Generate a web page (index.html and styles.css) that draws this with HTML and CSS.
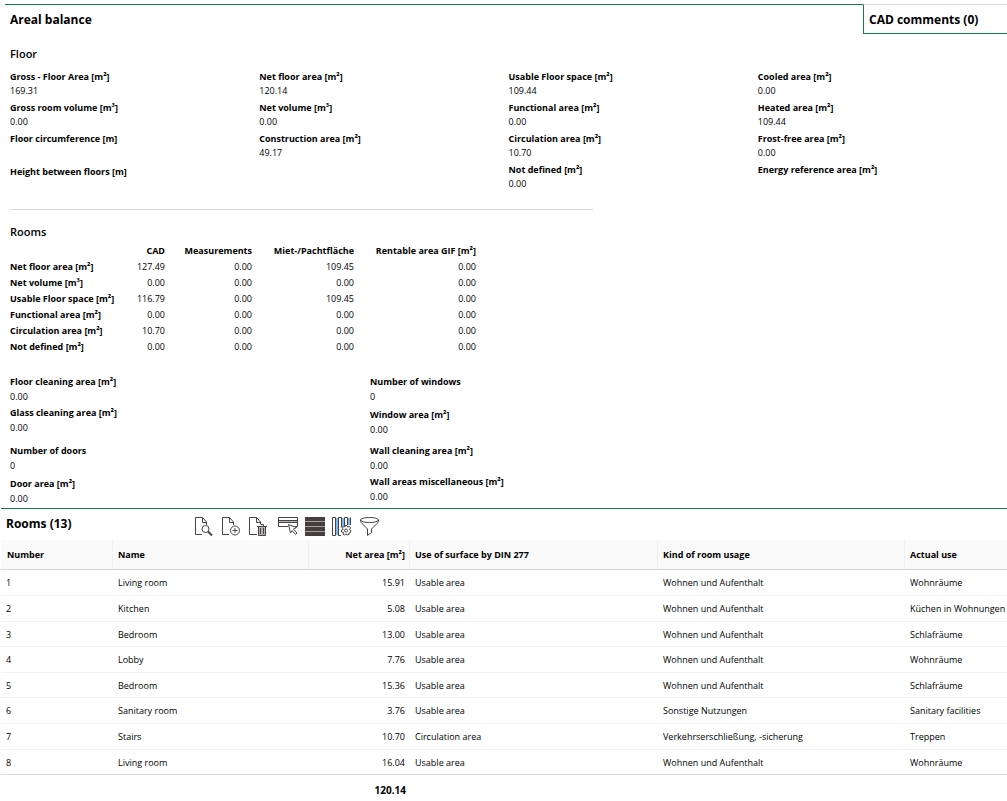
FILE: index.html
```html
<!DOCTYPE html>
<html lang="en">
<head>
<meta charset="utf-8">
<title>Areal balance</title>
<link rel="stylesheet" href="styles.css">
</head>
<body>
<header class="tabs">
  <h1 class="tab tab-active">Areal balance</h1>
  <button class="tab tab-other" type="button">CAD comments (0)</button>
</header>
<main>
  <section class="panel">
    <h2 class="section-title">Floor</h2>
    <div class="floor-grid">
      <dl class="fields">
        <dt>Gross - Floor Area [m²]</dt><dd>169.31</dd>
        <dt>Gross room volume [m³]</dt><dd>0.00</dd>
        <dt>Floor circumference [m]</dt><dd class="empty"></dd>
        <dt>Height between floors [m]</dt><dd></dd>
      </dl>
      <dl class="fields">
        <dt>Net floor area [m²]</dt><dd>120.14</dd>
        <dt>Net volume [m³]</dt><dd>0.00</dd>
        <dt>Construction area [m²]</dt><dd>49.17</dd>
      </dl>
      <dl class="fields">
        <dt>Usable Floor space [m²]</dt><dd>109.44</dd>
        <dt>Functional area [m²]</dt><dd>0.00</dd>
        <dt>Circulation area [m²]</dt><dd>10.70</dd>
        <dt>Not defined [m²]</dt><dd>0.00</dd>
      </dl>
      <dl class="fields">
        <dt>Cooled area [m²]</dt><dd>0.00</dd>
        <dt>Heated area [m²]</dt><dd>109.44</dd>
        <dt>Frost-free area [m²]</dt><dd>0.00</dd>
        <dt>Energy reference area [m²]</dt><dd></dd>
      </dl>
    </div>
    <hr class="divider">
    <h2 class="section-title">Rooms</h2>
    <table class="summary">
      <colgroup><col class="s-name"><col class="s-cad"><col class="s-meas"><col class="s-miet"><col class="s-gif"></colgroup>
      <thead>
        <tr><td></td><th scope="col">CAD</th><th scope="col">Measurements</th><th scope="col">Miet-/Pachtfläche</th><th scope="col">Rentable area GIF [m²]</th></tr>
      </thead>
      <tbody>
        <tr><th scope="row">Net floor area [m²]</th><td>127.49</td><td>0.00</td><td>109.45</td><td>0.00</td></tr>
        <tr><th scope="row">Net volume [m³]</th><td>0.00</td><td>0.00</td><td>0.00</td><td>0.00</td></tr>
        <tr><th scope="row">Usable Floor space [m²]</th><td>116.79</td><td>0.00</td><td>109.45</td><td>0.00</td></tr>
        <tr><th scope="row">Functional area [m²]</th><td>0.00</td><td>0.00</td><td>0.00</td><td>0.00</td></tr>
        <tr><th scope="row">Circulation area [m²]</th><td>10.70</td><td>0.00</td><td>0.00</td><td>0.00</td></tr>
        <tr><th scope="row">Not defined [m²]</th><td>0.00</td><td>0.00</td><td>0.00</td><td>0.00</td></tr>
      </tbody>
    </table>
    <div class="detail-grid">
      <dl class="fields">
        <dt>Floor cleaning area [m²]</dt><dd>0.00</dd>
        <dt>Glass cleaning area [m²]</dt><dd>0.00</dd>
      </dl>
      <dl class="fields loose">
        <dt>Number of windows</dt><dd>0</dd>
        <dt>Window area [m²]</dt><dd>0.00</dd>
      </dl>
      <dl class="fields loose">
        <dt>Number of doors</dt><dd>0</dd>
        <dt>Door area [m²]</dt><dd>0.00</dd>
      </dl>
      <dl class="fields">
        <dt>Wall cleaning area [m²]</dt><dd>0.00</dd>
        <dt>Wall areas miscellaneous [m²]</dt><dd>0.00</dd>
      </dl>
    </div>
  </section>
  <section class="rooms">
    <div class="rooms-bar">
      <h2 class="rooms-heading">Rooms (13)</h2>
      <div class="tools">
        <button type="button" aria-label="View room"><svg viewBox="0 0 20 20"><path d="M8 17.500H1.500V.5h7l4 4.500v3M8.500.5v5h4"/><circle cx="11.500" cy="12" r="3.500"/><path class="thick" d="M14 14.500l4 4"/></svg></button>
        <button type="button" aria-label="Add room"><svg viewBox="0 0 20 20"><path d="M8 17.500H1.500V.5h7l4 4.500v3M8.500.5v5h4"/><circle cx="14" cy="13.500" r="4.500"/><path d="M11.500 13.500h5M14 11v5"/></svg></button>
        <button type="button" aria-label="Delete room"><svg viewBox="0 0 20 20"><path d="M9 17.500H1.500V.5h7l4 4.500v2M8.500.5v5h4"/><path class="shade" d="M10.500 9.500h7v9h-7z"/><path d="M9 9.500h10M12.500 7.500h3v2M12.500 11v6M15.500 11v6"/></svg></button>
      </div>
      <div class="tools">
        <button type="button" aria-label="Select rows"><svg viewBox="0 0 20 20"><path class="shade" d="M.5 3.500h19v2H.5z"/><path d="M10 9.500H.5v-9h19v9H17M.5 3.500h19M.5 5.500h19"/><path class="cursor" d="M10.500 7.500l8 3-3 1.500 3.500 4-1.500 1.500-3.500-4-1.500 2.500z"/></svg></button>
        <button type="button" aria-label="Row density"><svg viewBox="0 0 20 20"><path class="band" d="M0 0h20v19H0z"/><path class="stripe" d="M0 4.500h20M0 9.500h20M0 14.500h20"/></svg></button>
        <button type="button" aria-label="Configure columns"><svg viewBox="0 0 20 20"><path class="blue" d="M5 1v17M11 1v9M17 1v7"/><path d="M.5.5h3v18h-3zM9 18.500H6.500V.5h3v10M12.500 9V.5h3V8M18.500 8V.5"/><path class="gear" d="M13 8.500h2l.5 1.500 2-.5 1 1.500-1 1.500 1.500 1-.5 2-1.500.5v1.500l-2 .5-1-1-1.500 1-1.500-1 .5-1.500-2-.5v-2l1.500-.5-.5-2 1.500-1 1 .5z"/><circle cx="14" cy="13.500" r="1.500"/></svg></button>
        <button type="button" aria-label="Filter"><svg viewBox="0 0 20 20"><ellipse cx="10.500" cy="3" rx="9" ry="2.500"/><path d="M1.500 3c0 2 1 3 2 4l5 5v6.500l4-3V12l5-5c1-1 2-2 2-4"/></svg></button>
      </div>
    </div>
    <table class="list">
      <colgroup><col class="c-number"><col class="c-name"><col class="c-area"><col class="c-din"><col class="c-kind"><col></colgroup>
      <thead>
        <tr><th scope="col">Number</th><th scope="col">Name</th><th scope="col" class="num">Net area [m²]</th><th scope="col">Use of surface by DIN 277</th><th scope="col">Kind of room usage</th><th scope="col">Actual use</th></tr>
      </thead>
      <tbody>
        <tr><td>1</td><td>Living room</td><td class="num">15.91</td><td>Usable area</td><td>Wohnen und Aufenthalt</td><td>Wohnräume</td></tr>
        <tr><td>2</td><td>Kitchen</td><td class="num">5.08</td><td>Usable area</td><td>Wohnen und Aufenthalt</td><td>Küchen in Wohnungen</td></tr>
        <tr><td>3</td><td>Bedroom</td><td class="num">13.00</td><td>Usable area</td><td>Wohnen und Aufenthalt</td><td>Schlafräume</td></tr>
        <tr><td>4</td><td>Lobby</td><td class="num">7.76</td><td>Usable area</td><td>Wohnen und Aufenthalt</td><td>Wohnräume</td></tr>
        <tr><td>5</td><td>Bedroom</td><td class="num">15.36</td><td>Usable area</td><td>Wohnen und Aufenthalt</td><td>Schlafräume</td></tr>
        <tr><td>6</td><td>Sanitary room</td><td class="num">3.76</td><td>Usable area</td><td>Sonstige Nutzungen</td><td>Sanitary facilities</td></tr>
        <tr><td>7</td><td>Stairs</td><td class="num">10.70</td><td>Circulation area</td><td>Verkehrserschließung, -sicherung</td><td>Treppen</td></tr>
        <tr><td>8</td><td>Living room</td><td class="num">16.04</td><td>Usable area</td><td>Wohnen und Aufenthalt</td><td>Wohnräume</td></tr>
      </tbody>
      <tfoot>
        <tr><td></td><td></td><td class="num">120.14</td><td></td><td></td><td></td></tr>
      </tfoot>
    </table>
  </section>
</main>
</body>
</html>
```
FILE: styles.css
```css
* { box-sizing: border-box; }
body {
  margin: 0;
  padding-top: 4px;
  background: #fff;
  color: #000;
  font: 9px/15px "Open Sans", "Noto Sans", sans-serif;
}
h1, h2, dl, dd { margin: 0; }

.tabs { display: flex; height: 30px; margin-left: 5px; }
.tab {
  font: 700 12px/28px "Open Sans", "Noto Sans", sans-serif;
  color: #000;
  text-align: left;
}
.tab-active { flex: 1; border-top: 1px solid #108043; padding: 1px 5px 0; }
.tab-other {
  width: 144px;
  padding: 1px 5px 0;
  background: #fff;
  border: solid #108043;
  border-width: 1px 0 1px 1px;
  border-top-color: #d9d9d9;
}

.panel { padding: 11px 0 2px 10px; }
.section-title { font-size: 11px; line-height: 18px; font-weight: 600; }
.floor-grid {
  display: grid;
  grid-template-columns: repeat(4, 1fr);
  margin-top: 6px;
}
.fields dt { line-height: 15px; font-weight: 700; }
.fields dd { line-height: 13px; min-height: 13px; margin-bottom: 3px; }
.fields dd.empty { margin-bottom: 5px; }
.divider {
  width: 59%;
  max-width: 583px;
  height: 1px;
  margin: 14px 0 13px;
  border: 0;
  background: #d9d9d9;
}

.summary { width: 466px; margin-top: 2px; border-collapse: collapse; table-layout: fixed; }
.summary th, .summary td { padding: 0; line-height: 16px; text-align: right; }
.summary th { font-weight: 700; white-space: nowrap; }
.summary tbody th { text-align: left; }
.s-name { width: 110px; }
.s-cad { width: 45px; }
.s-meas { width: 87px; }
.s-miet { width: 102px; }
.s-gif { width: 122px; }

.detail-grid {
  display: grid;
  grid-template-columns: 360px 1fr;
  row-gap: 6px;
  margin-top: 19px;
}
.detail-grid dd { padding-top: 1px; line-height: 14px; margin-bottom: 1px; }
.detail-grid .loose dd { margin-bottom: 3px; }
.detail-grid .fields dd:last-child { margin-bottom: 0; }

.rooms { border-top: 1px solid #108043; margin-left: 1px; }
.rooms-bar { display: flex; gap: 10px; height: 31px; padding-left: 5px; }
.rooms-heading { width: 178px; font-size: 12px; line-height: 29px; font-weight: 700; }
.tools { display: flex; gap: 7px; padding-top: 8px; }
.tools button { width: 20px; height: 20px; padding: 0; border: 0; background: none; }
.tools svg {
  display: block;
  width: 20px;
  height: 20px;
  fill: none;
  stroke: #4a4345;
  stroke-width: 1;
}
.tools .thick { stroke-width: 2; }
.tools .shade { fill: #b4b1b3; }
.tools .cursor, .tools .gear { fill: #fff; }
.tools .band { fill: #463d3e; stroke: none; }
.tools .stripe { stroke: #a5a1a3; }
.tools .blue { stroke: #7fb4e6; stroke-width: 2; }

.list { width: 100%; border-collapse: separate; border-spacing: 0; table-layout: fixed; }
.list th, .list td { padding: 0 4px 0 6px; text-align: left; white-space: nowrap; }
.list th {
  height: 30px;
  font-weight: 700;
  background: #fafafa;
  border-bottom: 1px solid #d6d6d6;
}
.list th + th { border-left: 1px solid #f0f0f0; padding-left: 5px; }
.list tbody td { height: 26px; border-bottom: 1px solid #f1f1f1; }
.list tbody tr:nth-child(3) td,
.list tbody tr:nth-child(5) td,
.list tbody tr:nth-child(8) td { height: 25px; }
.list tbody tr:last-child td { border-bottom-color: #d9d9d9; }
.list tbody td:first-child { padding-left: 5px; }
.list .num { text-align: right; }
.list tfoot td { height: 30px; font-size: 10px; font-weight: 700; }
.list tfoot .num { padding-right: 3px; }
.c-number { width: 111px; }
.c-name { width: 196px; }
.c-area { width: 101px; }
.c-din { width: 248px; }
.c-kind { width: 247px; }
```
